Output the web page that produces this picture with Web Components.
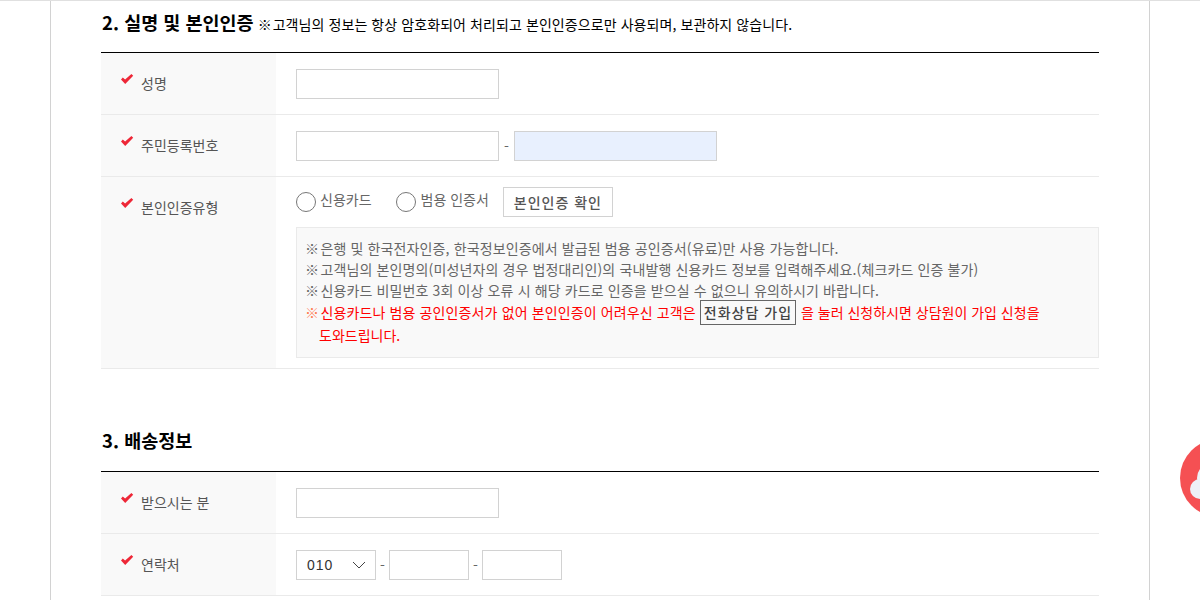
<!DOCTYPE html>
<html lang="ko">
<head>
<meta charset="utf-8">
<style>
  html, body { margin: 0; padding: 0; height: 600px; overflow: hidden; background: #fff; }
  body { font-family: "Noto Sans CJK KR", "Noto Sans", sans-serif; }
  .dash { margin: 0 5px; color: #666; font-size: 14px; }
  .mark { letter-spacing: -3px; }
</style>
</head>
<body>
<order-page>
  <form-section title="2. 실명 및 본인인증" style="--head-pad:6px">
    <span slot="note"><span class="mark">※</span> 고객님의 정보는 항상 암호화되어 처리되고 본인인증으로만 사용되며, 보관하지 않습니다.</span>
    <form-row label="성명"><text-box></text-box></form-row>
    <form-row label="주민등록번호"><text-box></text-box><span class="dash">-</span><text-box blue></text-box></form-row>
    <form-row label="본인인증유형" tall><auth-type></auth-type></form-row>
  </form-section>
  <form-section title="3. 배송정보" style="--head-pad:5px;margin-top:51px">
    <form-row label="받으시는 분"><text-box></text-box></form-row>
    <form-row label="연락처"><phone-input></phone-input></form-row>
  </form-section>
</order-page>

<script>
// outer page column with the grey side rules and the floating chat button
class OrderPage extends HTMLElement {
  constructor() {
    super();
    this.attachShadow({ mode: 'open' });
    this.shadowRoot.innerHTML = `
      <style>
        :host { display: block; position: relative; box-sizing: border-box; width: 1200px; height: 600px; overflow: hidden; border-top: 1px solid #e0e0e0; }
        .wrap { box-sizing: border-box; width: 1100px; height: 599px; margin-left: 50px; padding: 0 50px; border: 1px solid #d2d2d2; border-width: 0 1px; }
        svg { position: absolute; left: 1170px; top: 427px; width: 30px; height: 100px; }
      </style>
      <div class="wrap"><slot></slot></div>
      <svg viewBox="0 0 30 100">
        <circle cx="49" cy="50" r="39" fill="#f55053"/>
        <circle cx="30" cy="61" r="10" fill="#eef0f6"/>
        <circle cx="42" cy="50" r="15" fill="#eef0f6"/>
      </svg>
    `;
  }
}

class FormSection extends HTMLElement {
  constructor() {
    super();
    this.attachShadow({ mode: 'open' });
    this.shadowRoot.innerHTML = `
      <style>
        :host { display: block; }
        .head { display: flex; align-items: baseline; height: 51px; box-sizing: border-box; padding: var(--head-pad) 0 0 1px; color: #000; }
        h3 { margin: 0; font-size: 18.5px; font-weight: 700; line-height: 30px; }
        .note { margin-left: 4px; font-size: 14px; letter-spacing: .08px; }
        .rows { border-top: 1px solid #000; }
      </style>
      <div class="head"><h3></h3><span class="note"><slot name="note"></slot></span></div>
      <div class="rows"><slot></slot></div>
    `;
  }
  connectedCallback() {
    this.shadowRoot.querySelector('h3').textContent = this.getAttribute('title');
    this.removeAttribute('title');
  }
}

class FormRow extends HTMLElement {
  constructor() {
    super();
    this.attachShadow({ mode: 'open' });
    this.shadowRoot.innerHTML = `
      <style>
        :host { display: flex; border-bottom: 1px solid #eaeaea; min-height: 61px; font-size: 14px; color: #555; }
        .th { flex: 0 0 175px; box-sizing: border-box; background: #f9f9f9; display: flex; align-items: flex-start; padding: 19px 0 0 20px; line-height: 22px; }
        .th svg { width: 13px; height: 11px; margin: 2px 7px 0 0; flex: none; }
        .td { flex: 1; display: flex; align-items: center; padding: 0 0 0 20px; }
        :host([tall]) .td { align-items: flex-start; }
      </style>
      <div class="th">
        <svg viewBox="0 0 13 11"><path d="M0 5.4 L1.8 3.4 L4.1 5.4 L10.4 0 L12.2 1.8 L4.2 10 Z" fill="#ee2737"/></svg>
        <span class="lbl"></span>
      </div>
      <div class="td"><slot></slot></div>
    `;
  }
  connectedCallback() {
    this.shadowRoot.querySelector('.lbl').textContent = this.getAttribute('label');
  }
}

class TextBox extends HTMLElement {
  constructor() {
    super();
    this.attachShadow({ mode: 'open' });
    this.shadowRoot.innerHTML = `
      <style>
        :host { display: inline-block; box-sizing: border-box; width: 203px; height: 30px; border: 1px solid #d2d2d2; background: #fff; }
        :host([blue]) { background: #e8f0fe; }
      </style>
    `;
  }
}

class PhoneInput extends HTMLElement {
  constructor() {
    super();
    this.attachShadow({ mode: 'open' });
    this.shadowRoot.innerHTML = `
      <style>
        :host { display: flex; align-items: center; }
        .sel { box-sizing: border-box; width: 80px; height: 30px; border: 1px solid #d2d2d2; display: flex; align-items: center; justify-content: space-between; padding: 0 9px 0 10px; font-size: 14px; color: #333; letter-spacing: 1px; font-family: "Liberation Sans", "Noto Sans CJK KR", sans-serif; }
        svg { width: 14px; height: 8px; }
        span.d { margin: 0 4px; color: #666; }
        .box { box-sizing: border-box; width: 80px; height: 30px; border: 1px solid #d2d2d2; }
      </style>
      <div class="sel">010<svg viewBox="0 0 14 8"><path d="M1 1 L7 7 L13 1" fill="none" stroke="#444"/></svg></div>
      <span class="d">-</span><div class="box"></div>
      <span class="d">-</span><div class="box"></div>
    `;
  }
}

// radio pair, confirm button and the grey notice box
class AuthType extends HTMLElement {
  constructor() {
    super();
    this.attachShadow({ mode: 'open' });
    this.shadowRoot.innerHTML = `
      <style>
        :host { display: block; width: 803px; padding: 10px 0; font-size: 14px; color: #666; }
        .top { display: flex; align-items: center; height: 30px; }
        .radio { box-sizing: border-box; width: 20px; height: 20px; border: 1px solid #777; border-radius: 50%; background: #fff; }
        .lab { margin-left: 4px; position: relative; top: -3px; }
        .lab.a { margin-right: 24px; }
        .lab.b { margin-left: 5px; margin-right: 14px; }
        .btn { box-sizing: border-box; height: 30px; width: 110px; border: 1px solid #d2d2d2; display: flex; align-items: center; justify-content: center; font-weight: 500; color: #555; letter-spacing: 1px; }
        .info { box-sizing: border-box; margin-top: 10px; height: 131px; border: 1px solid #eaeaea; background: #f9f9f9; padding: 10px 8px; line-height: 21px; color: #666; letter-spacing: .12px; }
        .m { letter-spacing: -2.5px; }
        .red { color: #f00; }
        .red .m { color: #ff7a50; }
        .call { display: inline-block; box-sizing: border-box; height: 25px; line-height: 22px; border: 1px solid #666; padding: 0 3px; margin: -1px 1px 0 0; color: #444; font-weight: 500; letter-spacing: 1px; }
        .tail { letter-spacing: 0; }
        .more { display: block; padding-left: 14px; line-height: 20px; letter-spacing: 0; }
      </style>
      <div class="top">
        <span class="radio"></span><span class="lab a">신용카드</span>
        <span class="radio"></span><span class="lab b">범용 인증서</span>
        <span class="btn">본인인증 확인</span>
      </div>
      <div class="info">
        <span class="m">※</span> 은행 및 한국전자인증, 한국정보인증에서 발급된 범용 공인증서(유료)만 사용 가능합니다.<br>
        <span class="m">※</span> 고객님의 본인명의(미성년자의 경우 법정대리인)의 국내발행 신용카드 정보를 입력해주세요.(체크카드 인증 불가)<br>
        <span class="m">※</span> 신용카드 비밀번호 3회 이상 오류 시 해당 카드로 인증을 받으실 수 없으니 유의하시기 바랍니다.<br>
        <span class="red"><span class="m">※</span> 신용카드나 범용 공인인증서가 없어 본인인증이 어려우신 고객은 <span class="call">전화상담 가입</span><span class="tail"> 을 눌러 신청하시면 상담원이 가입 신청을</span><span class="more">도와드립니다.</span></span>
      </div>
    `;
  }
}

customElements.define('order-page', OrderPage);
customElements.define('form-section', FormSection);
customElements.define('form-row', FormRow);
customElements.define('text-box', TextBox);
customElements.define('phone-input', PhoneInput);
customElements.define('auth-type', AuthType);
</script>
</body>
</html>
